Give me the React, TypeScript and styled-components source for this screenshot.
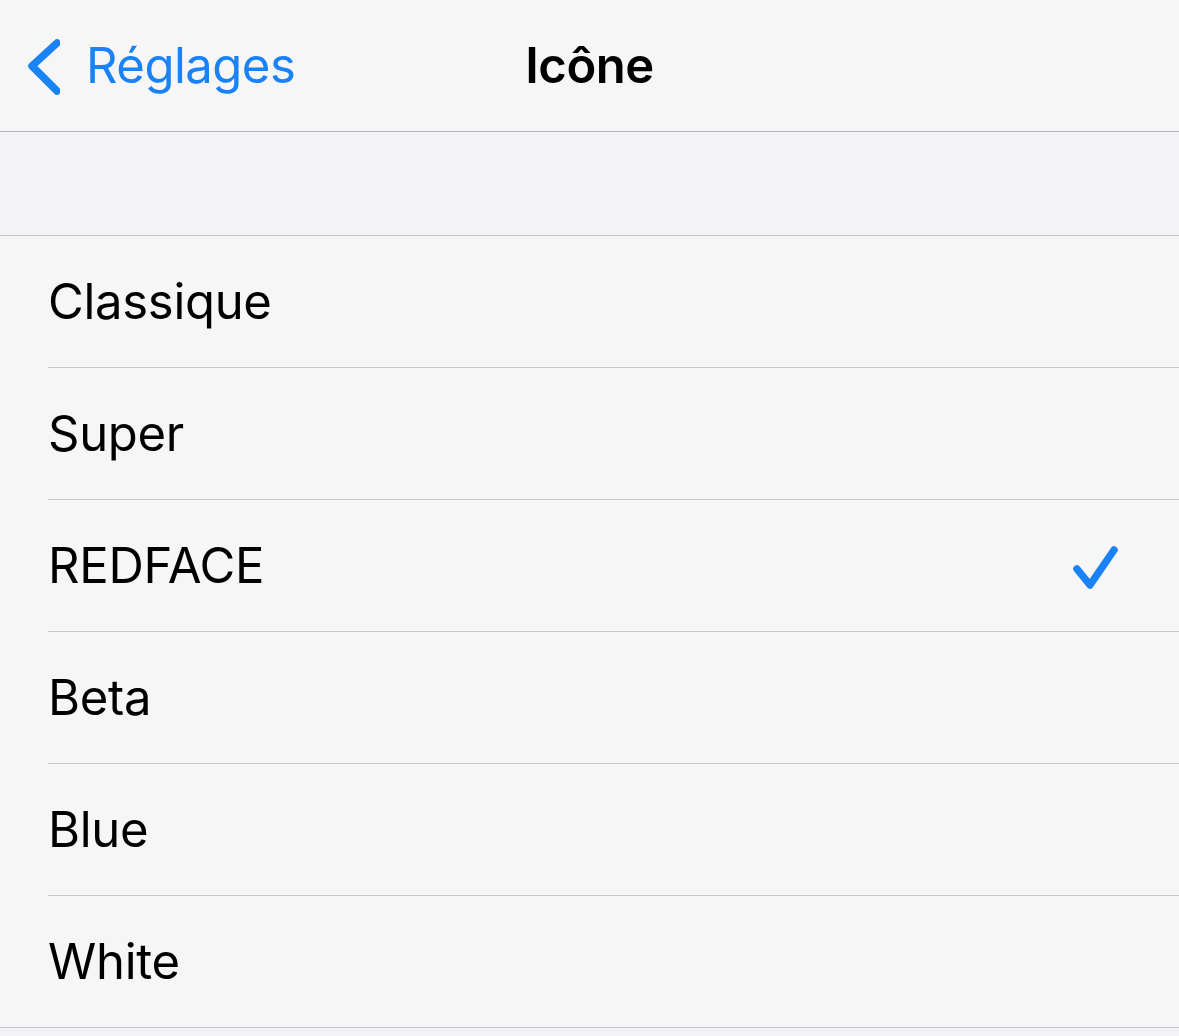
import React from "react";
import styled, { createGlobalStyle } from "styled-components";

const Global = createGlobalStyle`
  html, body { margin: 0; padding: 0; background: #f2f2f7; }
  body { font-family: Inter, "Noto Sans", sans-serif; -webkit-font-smoothing: antialiased; }
`;

const Screen = styled.div`
  width: 1179px;
  min-height: 1036px;
  background: #f2f2f7;
`;

const NavBar = styled.header`
  height: 131px;
  background: #f6f6f6;
  border-bottom: 1px solid #b3b3b8;
  display: grid;
  grid-template-columns: 1fr auto 1fr;
  align-items: center;
  box-sizing: content-box;
`;

const BackButton = styled.button`
  display: flex;
  align-items: center;
  gap: 26px;
  padding: 0 0 0 24px;
  border: none;
  background: none;
  color: #1a82f7;
  font-family: Inter, "Noto Sans", sans-serif;
  font-size: 49px;
  letter-spacing: -0.5px;
  cursor: pointer;
  justify-self: start;
`;

const Title = styled.h1`
  margin: 0;
  font-size: 49px;
  font-weight: 600;
  color: #000;
  letter-spacing: -0.5px;
`;

const Spacer = styled.div`
  height: 103px;
  background: #f2f2f7;
  border-bottom: 1px solid #c6c6c8;
`;

const List = styled.ul`
  list-style: none;
  margin: 0;
  padding: 0;
  background: #f6f6f6;
`;

const Row = styled.li<{ $last?: boolean }>`
  position: relative;
  height: 132px;
  box-sizing: border-box;
  display: flex;
  align-items: center;
  justify-content: space-between;
  padding: 0 60px 0 48px;
  font-size: 49px;
  color: #000;
  letter-spacing: -0.3px;
  &::after {
    content: "";
    position: absolute;
    bottom: 0;
    right: 0;
    left: ${(p) => (p.$last ? "0" : "48px")};
    height: 1px;
    background: ${(p) => (p.$last ? "#c6c6c8" : "#c8c8cb")};
  }
`;

const Label = styled.span`
  padding-bottom: 2px;
`;

const Chevron = () => (
  <svg width="36" height="60" viewBox="0 0 36 60" fill="none">
    <path d="M33 7 L8 30 L33 55" stroke="#1a82f7" strokeWidth="7.5" strokeLinecap="round" strokeLinejoin="round" />
  </svg>
);

const Check = () => (
  <svg width="48" height="54" viewBox="0 0 48 54" fill="none">
    <path d="M6 30 L19 46 L43 11" stroke="#1a82f7" strokeWidth="7.5" strokeLinecap="round" strokeLinejoin="round" />
  </svg>
);

const items = ["Classique", "Super", "REDFACE", "Beta", "Blue", "White"];
const selected = "REDFACE";

export default function App() {
  return (
    <Screen>
      <Global />
      <NavBar>
        <BackButton>
          <Chevron />
          <span>Réglages</span>
        </BackButton>
        <Title>Icône</Title>
        <div />
      </NavBar>
      <Spacer />
      <List>
        {items.map((it, i) => (
          <Row key={it} $last={i === items.length - 1}>
            <Label>{it}</Label>
            {it === selected && <Check />}
          </Row>
        ))}
      </List>
    </Screen>
  );
}
